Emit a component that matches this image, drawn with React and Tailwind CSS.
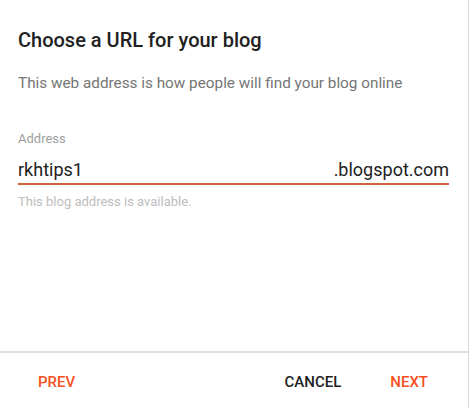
import React from "react";

// Blogger-style "choose a URL" step dialog
export default function App() {
  return (
    <div
      className="flex h-[408px] w-[469px] flex-col border-r border-[#d9d9d9] bg-white"
      style={{ fontFamily: "Roboto, 'Liberation Sans', sans-serif" }}
    >
      <div className="flex-1 px-[18px] pt-[27px]">
        <h1 className="text-[20px] font-medium leading-[26px] text-[#212121]">
          Choose a URL for your blog
        </h1>
        <p className="mt-[20px] text-[15.3px] leading-[20px] text-[#757575]">
          This web address is how people will find your blog online
        </p>

        <div className="mt-[38px] pr-[1px]">
          <label className="block text-[13px] leading-[16px] text-[#9e9e9e]">Address</label>
          <div className="mt-[11px] flex items-end justify-between border-b-2 border-[#d2643c] pb-[1px]">
            <span className="text-[18px] leading-[24px] text-[#212121]">rkhtips1</span>
            <span className="text-[18px] leading-[24px] text-[#212121]">.blogspot.com</span>
          </div>
          <p className="mt-[9px] text-[13px] leading-[16px] text-[#bdbdbd]">
            This blog address is available.
          </p>
        </div>
      </div>

      <div className="h-[2px] bg-[#e0e0e0]" />

      <div className="flex h-[55px] items-center pl-[38px] pr-[40px] pt-[3px] text-[15px] font-medium">
        <button type="button" className="text-[#f4511e]">PREV</button>
        <div className="flex-1" />
        <button type="button" className="text-[#212121]">CANCEL</button>
        <button type="button" className="ml-[49px] text-[#f4511e]">NEXT</button>
      </div>
    </div>
  );
}
